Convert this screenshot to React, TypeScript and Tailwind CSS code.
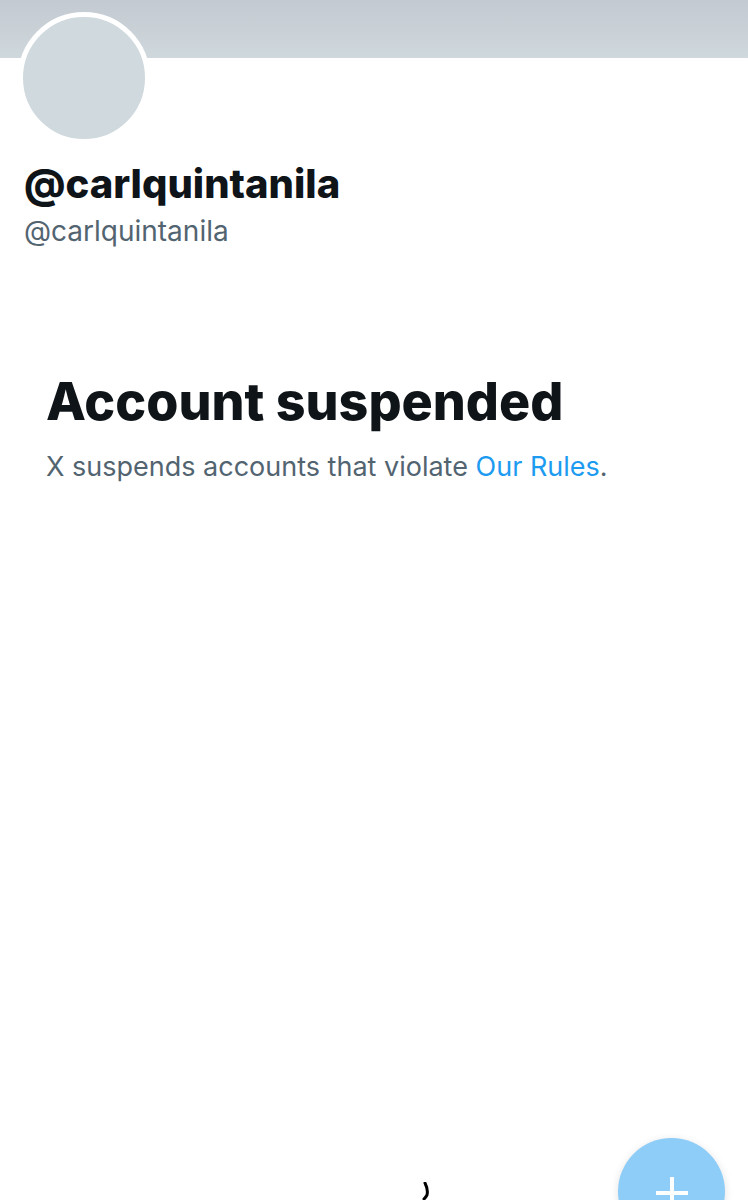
import React from "react";

const App: React.FC = () => {
  return (
    <div
      className="relative h-[1200px] w-[748px] overflow-hidden bg-white"
      style={{ fontFamily: "Inter, 'Liberation Sans', sans-serif" }}
    >
      {/* banner */}
      <div className="h-[58px] w-full bg-gradient-to-b from-[#c3cad1] to-[#cfd8dd]" />

      {/* avatar + names */}
      <div className="px-[18px]">
        <div className="-mt-[46px] h-[132px] w-[132px] rounded-full border-[5px] border-white bg-[#cfd9de]" />
      </div>
      <div className="px-6 pt-[16px]">
        <h1 className="text-[40px] font-extrabold leading-[48px] text-[#0f1419]">
          @carlquintanila
        </h1>
        <p className="mt-[6px] text-[28px] leading-[34px] text-[#536471]">
          @carlquintanila
        </p>
      </div>

      {/* suspended message */}
      <div className="px-[46px] pt-[124px]">
        <h2 className="text-[52px] font-extrabold leading-[60px] text-[#0f1419]">
          Account suspended
        </h2>
        <p className="mt-[19px] text-[27px] leading-[32px] text-[#536471]">
          X suspends accounts that violate{" "}
          <span className="text-[#1d9bf0]">Our Rules</span>.
        </p>
      </div>

      {/* stray mark */}
      <svg
        className="absolute left-[420px] top-[1182px]"
        width="16"
        height="18"
        viewBox="0 0 16 18"
      >
        <path
          d="M5 1 C7 5 8 9 7 13 C6 15 5 16 4 17"
          stroke="#000"
          strokeWidth="3"
          fill="none"
          strokeLinecap="round"
        />
      </svg>

      {/* floating compose button */}
      <div className="absolute left-[618px] top-[1138px] flex h-[107px] w-[107px] items-start justify-center rounded-full bg-[#8ecdf8] shadow-[0_2px_8px_rgba(0,0,0,0.12)]">
        <svg className="mt-[37px]" width="36" height="36" viewBox="0 0 36 36">
          <path d="M18 2 V34 M2 18 H34" stroke="#fff" strokeWidth="4" />
        </svg>
      </div>
    </div>
  );
};

export default App;
